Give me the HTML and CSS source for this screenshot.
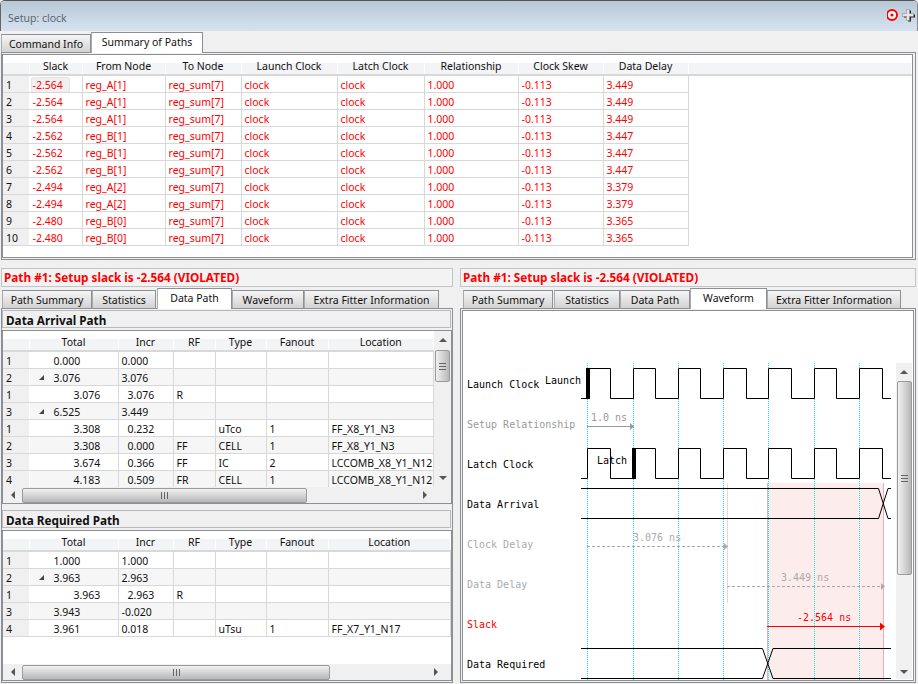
FILE: index.html
```html
<!DOCTYPE html>
<html>
<head>
  <title>Setup: clock</title>
  <link rel="stylesheet" href="styles.css">
</head>
<body>
<div class="window">

  <div class="titlebar">
    <span class="title-text">Setup: clock</span>
    <svg class="title-icons" width="30" height="16" viewBox="0 0 30 16">
      <circle cx="5" cy="8" r="5" fill="#fff" stroke="#f00" stroke-width="2"/>
      <circle cx="5" cy="8" r="1.600" fill="#f00"/>
      <path d="M21 3.500h3v4h4v3h-4v4h-3v-4h-4v-3h4z" fill="#222"/>
      <path d="M19.500 2.500h3v4h4v3h-4v4h-3v-4h-4v-3h4z" fill="#e6e6e6" stroke="#8a8a8a" stroke-width="0.600"/>
    </svg>
  </div>

  <div class="tabbar top-tabs">
    <div class="tab w90">Command Info</div>
    <div class="tab active w112">Summary of Paths</div>
  </div>

  <div class="pane top-pane">
    <div class="frame">
      <table class="grid red">
        <colgroup>
          <col class="c26"><col class="c53"><col class="c83"><col class="c76"><col class="c96"><col class="c87"><col class="c94"><col class="c85"><col class="c85"><col>
        </colgroup>
        <tr><th></th><th>Slack</th><th>From Node</th><th>To Node</th><th>Launch Clock</th><th>Latch Clock</th><th>Relationship</th><th>Clock Skew</th><th>Data Delay</th><th class="filler"></th></tr>
        <tr><td class="rh">1</td><td><span class="selected">-2.564</span></td><td>reg_A[1]</td><td>reg_sum[7]</td><td>clock</td><td>clock</td><td>1.000</td><td>-0.113</td><td>3.449</td></tr>
        <tr><td class="rh">2</td><td>-2.564</td><td>reg_A[1]</td><td>reg_sum[7]</td><td>clock</td><td>clock</td><td>1.000</td><td>-0.113</td><td>3.449</td></tr>
        <tr><td class="rh">3</td><td>-2.564</td><td>reg_A[1]</td><td>reg_sum[7]</td><td>clock</td><td>clock</td><td>1.000</td><td>-0.113</td><td>3.449</td></tr>
        <tr><td class="rh">4</td><td>-2.562</td><td>reg_B[1]</td><td>reg_sum[7]</td><td>clock</td><td>clock</td><td>1.000</td><td>-0.113</td><td>3.447</td></tr>
        <tr><td class="rh">5</td><td>-2.562</td><td>reg_B[1]</td><td>reg_sum[7]</td><td>clock</td><td>clock</td><td>1.000</td><td>-0.113</td><td>3.447</td></tr>
        <tr><td class="rh">6</td><td>-2.562</td><td>reg_B[1]</td><td>reg_sum[7]</td><td>clock</td><td>clock</td><td>1.000</td><td>-0.113</td><td>3.447</td></tr>
        <tr><td class="rh">7</td><td>-2.494</td><td>reg_A[2]</td><td>reg_sum[7]</td><td>clock</td><td>clock</td><td>1.000</td><td>-0.113</td><td>3.379</td></tr>
        <tr><td class="rh">8</td><td>-2.494</td><td>reg_A[2]</td><td>reg_sum[7]</td><td>clock</td><td>clock</td><td>1.000</td><td>-0.113</td><td>3.379</td></tr>
        <tr><td class="rh">9</td><td>-2.480</td><td>reg_B[0]</td><td>reg_sum[7]</td><td>clock</td><td>clock</td><td>1.000</td><td>-0.113</td><td>3.365</td></tr>
        <tr><td class="rh">10</td><td>-2.480</td><td>reg_B[0]</td><td>reg_sum[7]</td><td>clock</td><td>clock</td><td>1.000</td><td>-0.113</td><td>3.365</td></tr>
      </table>
    </div>
  </div>

  <div class="split">

    <div class="side left-side">
      <div class="path-title">Path #1: Setup slack is -2.564 (VIOLATED)</div>
      <div class="tabbar">
        <div class="tab w90">Path Summary</div>
        <div class="tab w64 gap">Statistics</div>
        <div class="tab active w75">Data Path</div>
        <div class="tab w72">Waveform</div>
        <div class="tab w135 gap">Extra Fitter Information</div>
      </div>
      <div class="pane data-pane">
        <div class="section-title">Data Arrival Path</div>
        <div class="table-box arrival-box">
          <div class="table-row">
            <table class="grid shaded">
              <colgroup><col class="c26"><col class="c89"><col class="c55"><col class="c42"><col class="c51"><col class="c62"><col></colgroup>
              <tr><th></th><th>Total</th><th>Incr</th><th>RF</th><th>Type</th><th>Fanout</th><th>Location</th></tr>
              <tr><td class="rh">1</td><td class="lvl1">0.000</td><td>0.000</td><td></td><td></td><td></td><td></td></tr>
              <tr><td class="rh">2</td><td class="lvl1"><span class="expander"></span>3.076</td><td>3.076</td><td></td><td></td><td></td><td></td></tr>
              <tr><td class="rh">1</td><td class="lvl2">3.076</td><td class="sub">3.076</td><td>R</td><td></td><td></td><td></td></tr>
              <tr><td class="rh">3</td><td class="lvl1"><span class="expander"></span>6.525</td><td>3.449</td><td></td><td></td><td></td><td></td></tr>
              <tr><td class="rh">1</td><td class="lvl2">3.308</td><td class="sub">0.232</td><td></td><td>uTco</td><td>1</td><td>FF_X8_Y1_N3</td></tr>
              <tr><td class="rh">2</td><td class="lvl2">3.308</td><td class="sub">0.000</td><td>FF</td><td>CELL</td><td>1</td><td>FF_X8_Y1_N3</td></tr>
              <tr><td class="rh">3</td><td class="lvl2">3.674</td><td class="sub">0.366</td><td>FF</td><td>IC</td><td>2</td><td>LCCOMB_X8_Y1_N12</td></tr>
              <tr><td class="rh">4</td><td class="lvl2">4.183</td><td class="sub">0.509</td><td>FR</td><td>CELL</td><td>1</td><td>LCCOMB_X8_Y1_N12</td></tr>
            </table>
            <div class="vscroll short">
              <span class="arrow up"></span>
              <div class="thumb v-thumb small"><span class="grip v"></span></div>
              <div class="track"></div>
              <span class="arrow down"></span>
            </div>
          </div>
          <div class="hscroll">
            <span class="arrow left"></span>
            <div class="thumb h-thumb arrival-thumb"><span class="grip h"></span></div>
            <div class="track"></div>
            <span class="arrow right"></span>
            <div class="corner"></div>
          </div>
        </div>

        <div class="section-title second">Data Required Path</div>
        <div class="table-box required-box">
          <table class="grid shaded wide">
            <colgroup><col class="c26"><col class="c89"><col class="c55"><col class="c42"><col class="c51"><col class="c62"><col></colgroup>
            <tr><th></th><th>Total</th><th>Incr</th><th>RF</th><th>Type</th><th>Fanout</th><th>Location</th></tr>
            <tr><td class="rh">1</td><td class="lvl1">1.000</td><td>1.000</td><td></td><td></td><td></td><td></td></tr>
            <tr><td class="rh">2</td><td class="lvl1"><span class="expander"></span>3.963</td><td>2.963</td><td></td><td></td><td></td><td></td></tr>
            <tr><td class="rh">1</td><td class="lvl2">3.963</td><td class="sub">2.963</td><td>R</td><td></td><td></td><td></td></tr>
            <tr><td class="rh">3</td><td class="lvl1">3.943</td><td>-0.020</td><td></td><td></td><td></td><td></td></tr>
            <tr><td class="rh">4</td><td class="lvl1">3.961</td><td>0.018</td><td></td><td>uTsu</td><td>1</td><td>FF_X7_Y1_N17</td></tr>
          </table>
          <div class="hscroll pinned">
            <span class="arrow left"></span>
            <div class="thumb h-thumb required-thumb"><span class="grip h"></span></div>
            <div class="track"></div>
            <span class="arrow right"></span>
          </div>
        </div>
      </div>
    </div>

    <div class="side right-side">
      <div class="path-title">Path #1: Setup slack is -2.564 (VIOLATED)</div>
      <div class="tabbar">
        <div class="tab w90 gap">Path Summary</div>
        <div class="tab w66">Statistics</div>
        <div class="tab w70">Data Path</div>
        <div class="tab active w77">Waveform</div>
        <div class="tab w134">Extra Fitter Information</div>
      </div>
      <div class="pane wave-pane">
        <svg class="wave" width="450" height="369" viewBox="463 311 450 369">
          <!-- slack window -->
          <rect x="767" y="483" width="117" height="197" fill="#fdecec"/>
          <path d="M767.500 483V680" stroke="#d8b8b8"/>
          <path d="M883.500 483V680" stroke="#eeb0b4"/>
          <path d="M727.500 483V603" stroke="#dcdcdc"/>

          <!-- clock edges -->
          <g stroke="#1fdede" stroke-dasharray="1 1">
            <path d="M587.500 363V680"/>
            <path d="M633.500 363V680"/>
            <path d="M678.500 363V680"/>
            <path d="M723.500 363V680"/>
            <path d="M768.500 363V680"/>
            <path d="M814.500 363V680"/>
            <path d="M859.500 363V680"/>
          </g>

          <!-- waveforms -->
          <g fill="none" stroke="#000">
            <path d="M581 398.500H587.500V368.500H610.500V398.500H633.500V368.500H655.500V398.500H678.500V368.500H700.500V398.500H723.500V368.500H746.500V398.500H768.500V368.500H791.500V398.500H814.500V368.500H836.500V398.500H859.500V368.500H882.500V398.500H891"/>
            <path d="M581 478.500H587.500V448.500H610.500V478.500H633.500V448.500H655.500V478.500H678.500V448.500H700.500V478.500H723.500V448.500H746.500V478.500H768.500V448.500H791.500V478.500H814.500V448.500H836.500V478.500H859.500V448.500H882.500V478.500H891"/>
            <path d="M581 488.500H878.500L888 518.500H891M581 518.500H878.500L888 488.500H891"/>
            <path d="M581 648.500H762.500L773 678.500H891M581 678.500H762.500L773 648.500H891"/>
          </g>
          <rect x="586" y="368" width="4" height="31" fill="#000"/>
          <rect x="632" y="448" width="4" height="31" fill="#000"/>

          <!-- arrows -->
          <path d="M587 426.500H632" stroke="#999"/>
          <path d="M630 423L634 426.500L630 430z" fill="#999"/>
          <path d="M587 546.500H724" stroke="#aaa" stroke-dasharray="3 2"/>
          <path d="M724 543L728 546.500L724 550z" fill="#aaa"/>
          <path d="M727 586.500H881" stroke="#aaa" stroke-dasharray="3 2"/>
          <path d="M881 583L885 586.500L881 590z" fill="#aaa"/>
          <path d="M767 626.500H881" stroke="#f00"/>
          <path d="M880 622.500L885 626.500L880 630.500z" fill="#f00"/>

          <!-- labels -->
          <g class="wave-text">
            <text x="467" y="388">Launch Clock</text>
            <text x="545" y="384">Launch</text>
            <text class="dim" x="467" y="428">Setup Relationship</text>
            <text class="dim" x="591" y="421">1.0 ns</text>
            <text x="467" y="468">Latch Clock</text>
            <text x="597" y="464">Latch</text>
            <text x="467" y="508">Data Arrival</text>
            <text class="dim2" x="467" y="548">Clock Delay</text>
            <text class="dim2" x="633" y="541">3.076 ns</text>
            <text class="dim2" x="467" y="588">Data Delay</text>
            <text class="dim2" x="781" y="581">3.449 ns</text>
            <text class="hot" x="467" y="628">Slack</text>
            <text class="hot" x="797" y="621">-2.564 ns</text>
            <text x="467" y="668">Data Required</text>
          </g>
        </svg>
        <div class="vscroll wave-scroll">
          <span class="arrow up"></span>
          <div class="thumb v-thumb big"><span class="grip v"></span></div>
          <div class="track"></div>
          <span class="arrow down"></span>
        </div>
      </div>
    </div>

  </div>
</div>
</body>
</html>
```

FILE: styles.css
```css
* {
    box-sizing: border-box;
}

body {
    margin: 0;
    background-color: #f0f0f0;
    font-family: "Noto Sans", "Liberation Sans", sans-serif;
    font-size: 10.500px;
    color: #111;
}

.window {
    width: 918px;
    height: 684px;
    overflow: hidden;
    display: flex;
    flex-direction: column;
    background-color: #f0f0f0;
    border-top: 1px solid #555;
    border-top-left-radius: 5px;
    border-top-right-radius: 5px;
}

/* title */
.titlebar {
    height: 30px;
    flex: none;
    display: flex;
    align-items: center;
    justify-content: space-between;
    padding: 4px 0 0 7px;
    border-left: 1px solid #666;
    border-right: 1px solid #888;
    background: linear-gradient(#b9c8d6, #d6e2f0);
}

.title-text {
    font-size: 10.500px;
    color: #5c6670;
}

.title-icons {
    margin: -6px 0 0 0;
}

/* tabs */
.tabbar {
    display: flex;
    align-items: flex-end;
    flex: none;
    height: 22px;
    margin-left: 1px;
    position: relative;
    z-index: 1;
}

.top-tabs {
    margin-top: 1px;
}

.right-side .tabbar {
    margin-left: 3px;
}

.tab {
    height: 18px;
    margin-bottom: 2px;
    border: 1px solid #8c9096;
    border-bottom: none;
    border-left-color: #aaa;
    background: linear-gradient(#f6f6f6, #d2d2d2);
    text-align: center;
    line-height: 19px;
    white-space: nowrap;
}

.tab.gap {
    margin-right: 1px;
}

.tab.active {
    height: 21px;
    margin-bottom: 1px;
    background: #fff;
}

.w64 { width: 64px; }
.w66 { width: 66px; }
.w70 { width: 70px; }
.w72 { width: 72px; }
.w75 { width: 75px; }
.w77 { width: 77px; }
.w90 { width: 90px; }
.w112 { width: 112px; }
.w134 { width: 134px; }
.w135 { width: 135px; }

/* panes */
.pane {
    border: 1px solid #8c9096;
    background-color: #f0f0f0;
}

.top-pane {
    height: 208px;
    width: 915px;
    flex: none;
    margin: -2px 0 0 1px;
    padding: 1px 2px 1px 0;
}

.frame {
    height: 100%;
    border: 1px solid #8c9096;
    background-color: #fff;
}

.split {
    display: flex;
    flex: 1;
    min-height: 0;
    margin-top: 8px;
}

.side {
    display: flex;
    flex-direction: column;
}

.left-side {
    width: 452px;
    margin: 0 7px 0 1px;
}

.right-side {
    width: 456px;
}

.path-title {
    height: 19px;
    flex: none;
    margin-bottom: 1px;
    padding-left: 2px;
    border: 1px solid #c2c4c7;
    background-color: #f3f3f3;
    font-size: 11.750px;
    font-weight: bold;
    line-height: 17px;
    color: #f00;
    white-space: nowrap;
}

.data-pane {
    flex: 1;
    margin: -2px 0 1px;
    padding: 1px 0;
    min-height: 0;
    display: flex;
    flex-direction: column;
}

.section-title {
    height: 18px;
    flex: none;
    margin-right: 1px;
    padding-left: 3px;
    border: 1px solid #b8babd;
    font-size: 11.750px;
    font-weight: bold;
    line-height: 19px;
    color: #111;
}

.section-title.second {
    margin-top: 6px;
}

.table-box {
    margin-top: 2px;
    border: 1px solid #8c9096;
    background-color: #fff;
    position: relative;
    display: flex;
    flex-direction: column;
}

.arrival-box {
    height: 174px;
    flex: none;
}

.required-box {
    flex: 1;
}

.table-row {
    display: flex;
    height: 156px;
}

/* tables */
.grid {
    border-collapse: collapse;
    table-layout: fixed;
    width: 431px;
    flex: none;
    color: #111;
}

.grid.wide {
    width: 448px;
}

.frame .grid {
    width: 909px;
}

.grid th {
    height: 20px;
    padding: 2px 0 0;
    font-weight: normal;
    text-align: center;
    background: linear-gradient(#fff 40%, #f3f4f6 40%);
    border-right: 1px solid #fff;
    border-bottom: 2px solid #d8d8d8;
}

.grid td {
    height: 17px;
    padding: 2px 0 0 3px;
    line-height: 14px;
    border-right: 1px solid #d8d8d8;
    border-bottom: 1px solid #d8d8d8;
    white-space: nowrap;
    overflow: hidden;
}

.grid td.rh {
    background-color: #f0f0f0;
    color: #111;
    padding-left: 3px;
    border-right-color: #fff;
}

.red td {
    color: #f00;
}

.shaded tr:nth-child(odd) td {
    background-color: #f6f6f6;
}

.shaded tr:nth-child(odd) td.rh {
    background-color: #f0f0f0;
}

.grid td.lvl1 {
    padding-left: 24px;
    position: relative;
}

.grid td.lvl2 {
    padding-left: 44px;
}

.grid td.sub {
    padding-left: 9px;
}

.expander {
    position: absolute;
    left: 9px;
    top: 6px;
    width: 0;
    height: 0;
    border-left: 5px solid transparent;
    border-bottom: 5px solid #444;
}

.selected {
    display: inline-block;
    width: 37px;
    margin-left: -1px;
    padding-left: 1px;
    background-color: #f0f0f0;
    border-radius: 2px;
    box-shadow: 0 0 0 1px #e4e4e4;
    line-height: 14px;
}

.c26 { width: 26px; }
.c42 { width: 42px; }
.c51 { width: 51px; }
.c53 { width: 53px; }
.c55 { width: 55px; }
.c62 { width: 62px; }
.c76 { width: 76px; }
.c83 { width: 83px; }
.c85 { width: 85px; }
.c87 { width: 87px; }
.c89 { width: 89px; }
.c94 { width: 94px; }
.c96 { width: 96px; }

/* scrollbars */
.vscroll {
    width: 17px;
    display: flex;
    flex-direction: column;
    align-items: center;
    background-color: #f0f0f0;
}

.short {
    padding: 7px 0;
}

.hscroll {
    height: 16px;
    flex: none;
    display: flex;
    align-items: center;
    background-color: #f0f0f0;
    padding-left: 8px;
}

.hscroll.pinned {
    position: absolute;
    left: 0;
    right: 0;
    bottom: 0;
    padding-right: 7px;
}

.track {
    flex: 1;
}

.corner {
    width: 18px;
    align-self: stretch;
}

.thumb {
    display: flex;
    align-items: center;
    justify-content: center;
    border: 1px solid #9a9a9a;
    border-radius: 2px;
}

.h-thumb {
    height: 15px;
    margin-left: 7px;
    background: linear-gradient(#f0f0f0, #e0e0e0 30%, #b8b8b8);
}

.arrival-thumb { width: 285px; }
.required-thumb { width: 308px; }

.v-thumb {
    width: 15px;
    background: linear-gradient(90deg, #f0f0f0, #e0e0e0 30%, #b8b8b8);
}

.v-thumb.small {
    height: 32px;
    margin-top: 8px;
}

.v-thumb.big {
    height: 194px;
    margin-top: 7px;
}

.grip {
    display: block;
    background-color: transparent;
}

.grip.v {
    width: 7px;
    height: 7px;
    background-image: repeating-linear-gradient(#666 0 1px, transparent 1px 3px);
}

.grip.h {
    width: 7px;
    height: 7px;
    background-image: repeating-linear-gradient(90deg, #666 0 1px, transparent 1px 3px);
}

.arrow {
    width: 0;
    height: 0;
    flex: none;
    display: block;
}

.arrow.up {
    border: 4px solid transparent;
    border-top: none;
    border-bottom: 4px solid #555;
}

.arrow.down {
    border: 4px solid transparent;
    border-bottom: none;
    border-top: 4px solid #555;
}

.arrow.left {
    border: 4px solid transparent;
    border-left: none;
    border-right: 4px solid #555;
}

.arrow.right {
    border: 4px solid transparent;
    border-right: none;
    border-left: 4px solid #555;
    margin-right: 6px;
}

/* waveform view */
.wave-pane {
    flex: 1;
    margin: -2px 0 1px;
    padding: 1px;
    min-height: 0;
    position: relative;
    overflow: hidden;
}

.wave {
    display: block;
    background-color: #fff;
    border: 1px solid #8c9096;
    box-sizing: content-box;
}

.wave-text text {
    font-family: "DejaVu Sans Mono", monospace;
    font-size: 10px;
    fill: #000;
}

.wave-text .dim {
    fill: #999;
}

.wave-text .dim2 {
    fill: #aaa;
}

.wave-text .hot {
    fill: #f00;
}

.wave-scroll {
    position: absolute;
    top: 54px;
    right: 3px;
    bottom: 3px;
    width: 16px;
    padding: 7px 0 5px;
}
```
